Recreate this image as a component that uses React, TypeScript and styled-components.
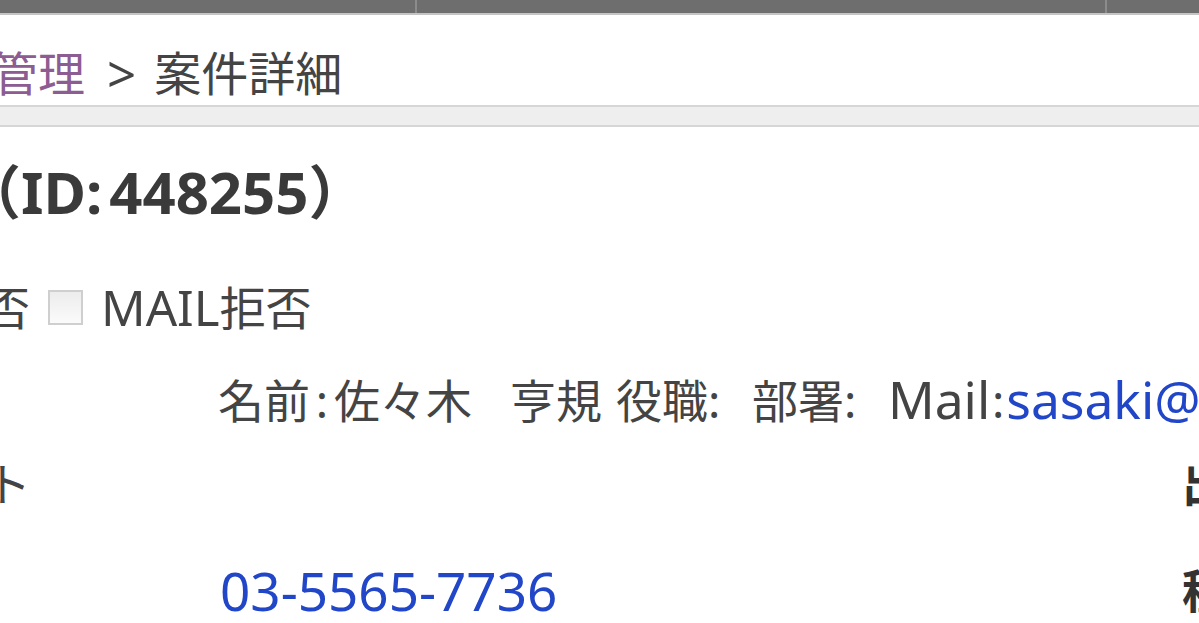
import React from "react";
import styled, { createGlobalStyle } from "styled-components";

const GlobalStyle = createGlobalStyle`
  html, body {
    margin: 0;
    padding: 0;
    background: #ffffff;
  }
  body {
    width: 1199px;
    height: 623px;
    overflow: hidden;
    font-family: "Noto Sans", "Noto Sans CJK JP", sans-serif;
    color: #444444;
  }
`;

// Top navigation strip (cut off by the viewport)
const TopBar = styled.div`
  height: 13px;
  background: #6e6e6e;
  border-bottom: 2px solid #c4c4c4;
  display: grid;
  grid-template-columns: 417px 690px 1fr;
`;

const NavCell = styled.div<{ $divider?: boolean }>`
  border-right: ${(p) => (p.$divider ? "2px solid #8c8c8c" : "none")};
`;

const Breadcrumb = styled.div`
  height: 90px;
  display: flex;
  align-items: center;
  padding-top: 26px;
  box-sizing: border-box;
  margin-left: -9px;
  font-size: 47px;
  line-height: 1;
  white-space: nowrap;
`;

const CrumbLink = styled.a`
  color: #8c5c92;
  text-decoration: none;
`;

const CrumbSep = styled.span`
  color: #444444;
  margin: 0 18px 0 22px;
  font-size: 51px;
`;

const CrumbCurrent = styled.span`
  color: #444444;
`;

const Band = styled.div`
  height: 18px;
  background: #eeeeee;
  border-top: 2px solid #d6d6d6;
  border-bottom: 2px solid #d6d6d6;
`;

const Title = styled.h1`
  margin: 0;
  height: 130px;
  display: flex;
  align-items: center;
  margin-left: -37px;
  font-size: 58px;
  font-weight: 700;
  color: #3a3a3a;
  line-height: 1;
  white-space: nowrap;
`;

const TitleId = styled.span`
  margin-left: 7px;
`;

const OptionRow = styled.div`
  height: 100px;
  display: flex;
  align-items: center;
  margin-left: -16px;
  font-size: 46px;
  line-height: 1;
  white-space: nowrap;
`;

const Check = styled.span`
  display: inline-block;
  width: 35px;
  height: 35px;
  box-sizing: border-box;
  border: 2px solid #cfcfcf;
  background: linear-gradient(#ececec, #fbfbfb);
  margin: 0 18px 0 18px;
`;

const Lat = styled.span<{ $size?: number }>`
  flex-shrink: 0;
  font-size: ${(p) => p.$size ?? 1.12}em;
`;

const ContactRow = styled.div`
  height: 86px;
  display: flex;
  align-items: center;
  padding-left: 218px;
  font-size: 46px;
  line-height: 1;
  white-space: nowrap;
`;

// fixed-width separator (colon / gap) between label fields
const Sep = styled.span<{ $w: number }>`
  flex-shrink: 0;
  display: inline-block;
  width: ${(p) => p.$w}px;
  text-align: ${(p) => (p.$w > 30 ? "left" : "center")};
`;

const Link = styled.a`
  flex-shrink: 0;
  color: #2146c8;
  text-decoration: none;
`;

const Grid = styled.div`
  display: grid;
  grid-template-columns: 220px 962px 1fr;
  grid-template-rows: 80px 134px;
  align-items: center;
  font-size: 46px;
  line-height: 1;
  white-space: nowrap;
`;

const Label = styled.div`
  margin-left: -15px;
`;

const SideLabel = styled.div`
  font-weight: 700;
  color: #333333;
`;

const Phone = styled(Link)`
  font-size: 53px;
`;

export default function App() {
  return (
    <>
      <GlobalStyle />
      <TopBar>
        <NavCell $divider />
        <NavCell $divider />
        <NavCell />
      </TopBar>
      <Breadcrumb>
        <CrumbLink href="#">管理</CrumbLink>
        <CrumbSep>&gt;</CrumbSep>
        <CrumbCurrent>案件詳細</CrumbCurrent>
      </Breadcrumb>
      <Band />
      <Title>
        （ID:<TitleId>448255</TitleId>）
      </Title>
      <OptionRow>
        否<Check />
        <Lat $size={1.07}>MAIL</Lat>拒否
      </OptionRow>
      <ContactRow>
        名前<Sep $w={24}>:</Sep>佐々木<Sep $w={38} />亨規<Sep $w={14} />役職
        <Sep $w={44}>:</Sep>部署<Sep $w={44}>:</Sep>
        <Lat>Mail</Lat>
        <Sep $w={16}>:</Sep>
        <Link href="#">
          <Lat>sasaki@example.co.jp</Lat>
        </Link>
      </ContactRow>
      <Grid>
        <Label>ト</Label>
        <div />
        <SideLabel>出</SideLabel>
        <div />
        <Phone href="#">03-5565-7736</Phone>
        <SideLabel>種</SideLabel>
      </Grid>
    </>
  );
}
